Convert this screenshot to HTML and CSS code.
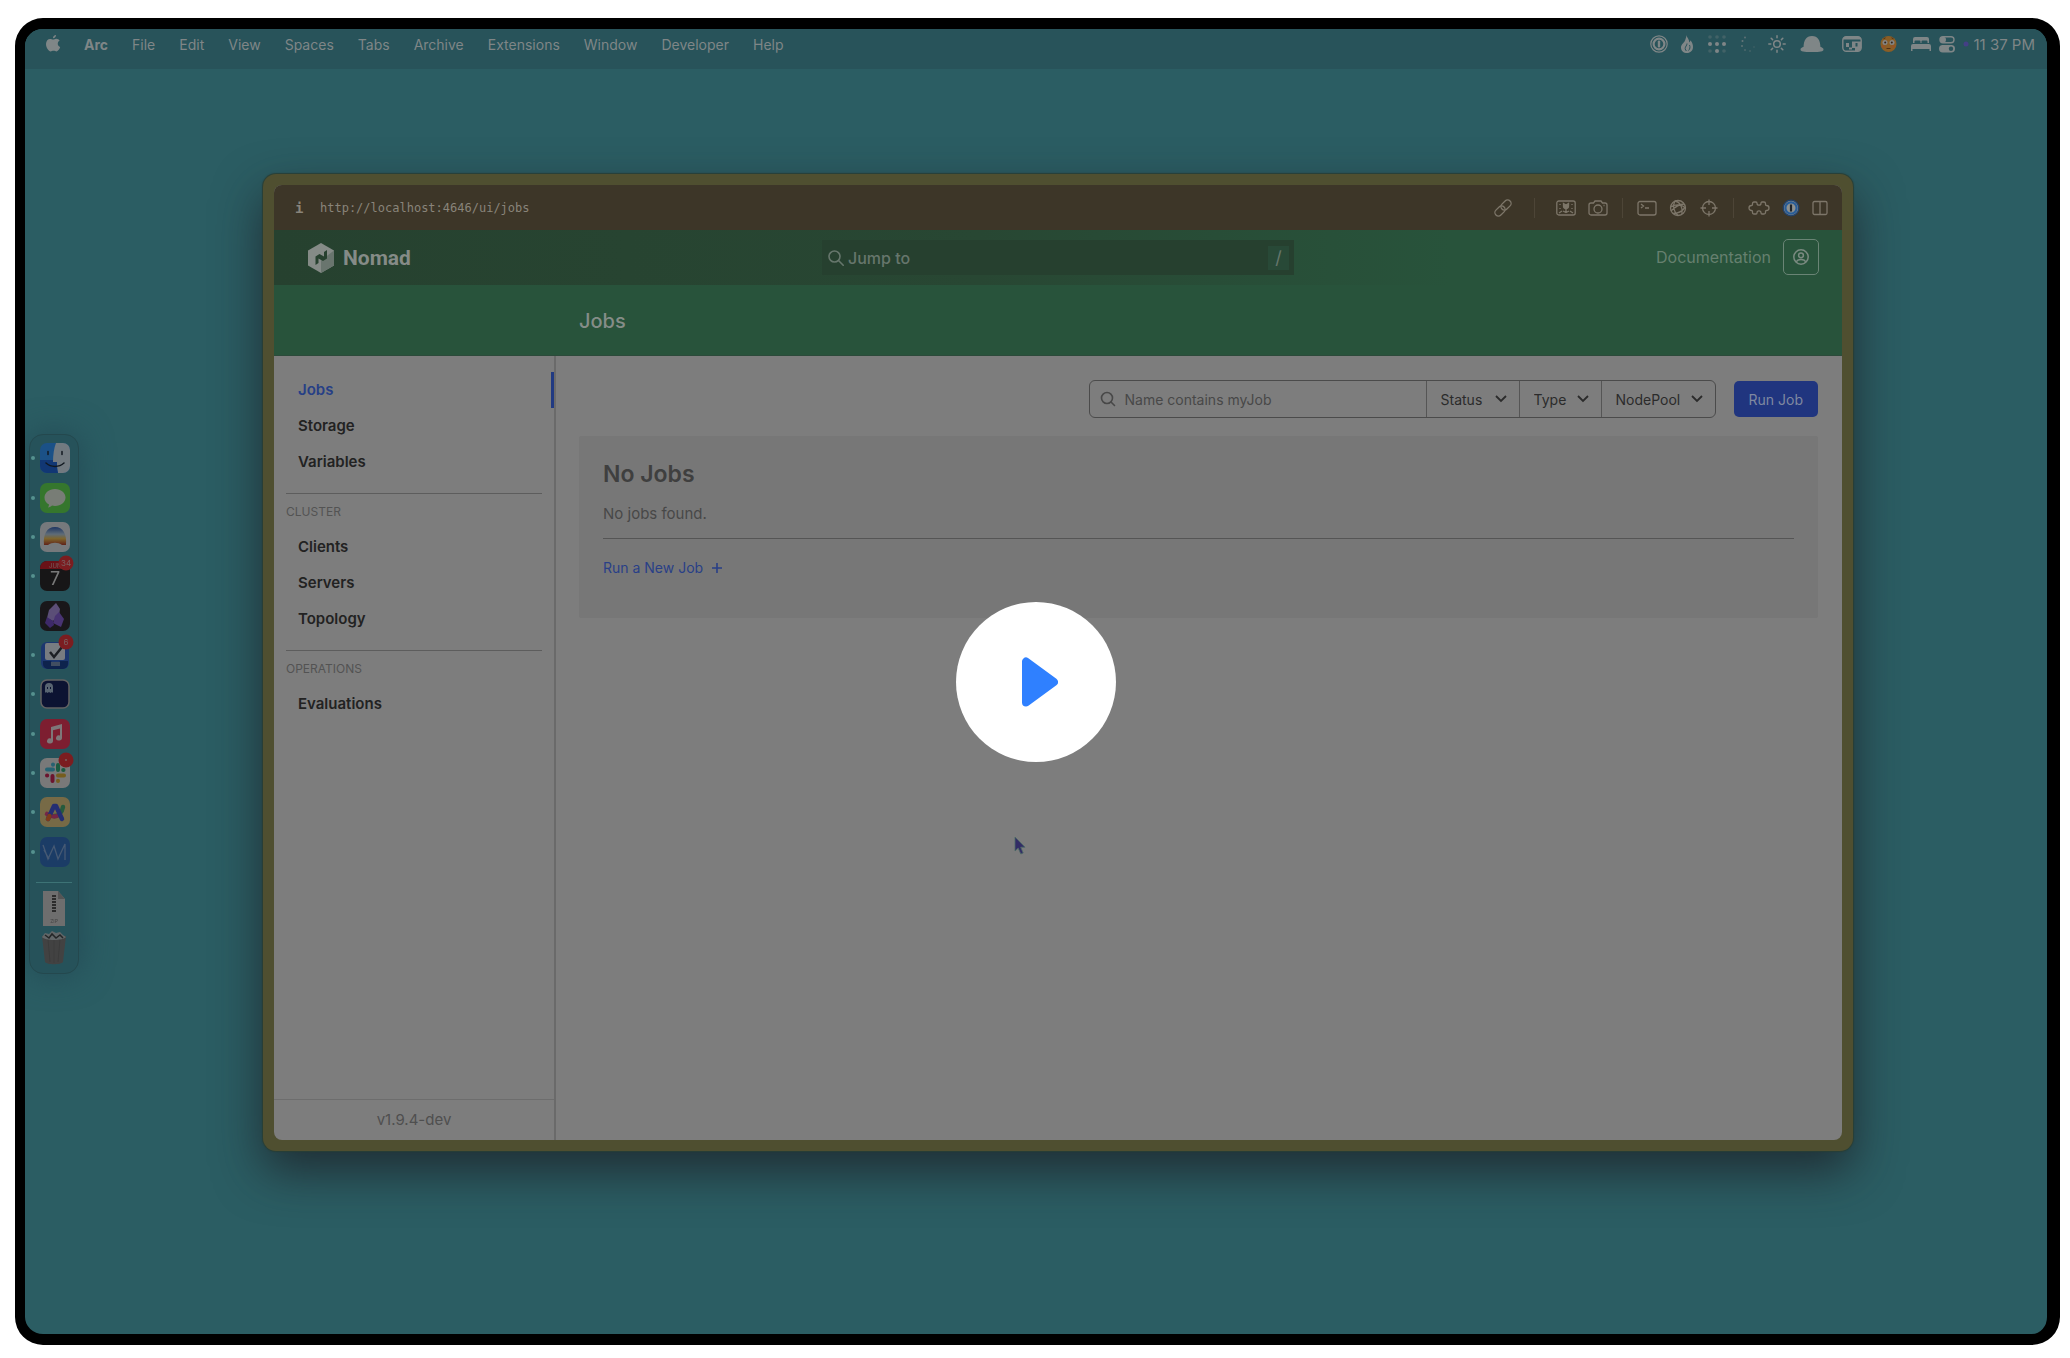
FILE: index.html
```html
<!DOCTYPE html>
<html lang="en">
<head>
<meta charset="utf-8">
<title>Nomad - Jobs</title>
<link rel="stylesheet" href="styles.css">
</head>
<body>
<main class="device">
  <header class="menubar">
    <svg class="apple" width="16" height="20" viewBox="0 0 16 20"><path d="M11 1c.1 1.700-1.300 3.300-3 3.300C7.800 2.700 9.400 1.100 11 1zM8.200 5.600c.8 0 1.700-.9 3.200-.8 1.300.1 2.500.7 3.200 1.800-2.700 1.700-2.300 5.400.6 6.500-.6 1.700-2 4.300-3.600 4.300-1.200 0-1.600-.7-3-.7s-1.900.7-3 .7C3.700 17.400 1 13.800 1 10.100 1 6.800 3 5 5 5c1.400 0 2.300.6 3.200.6z"/></svg>
    <nav class="menus">
      <a href="#" class="app-name">Arc</a><a href="#">File</a><a href="#">Edit</a><a href="#">View</a><a href="#">Spaces</a><a href="#">Tabs</a><a href="#">Archive</a><a href="#">Extensions</a><a href="#">Window</a><a href="#">Developer</a><a href="#">Help</a>
    </nav>
    <div class="status">
      <div class="status-group">
        <svg width="18" height="18" viewBox="0 0 18 18"><circle cx="9" cy="9" r="8.200" fill="none" stroke="currentColor" stroke-width="1.200"/><circle cx="9" cy="9" r="5.400" fill="none" stroke="currentColor" stroke-width="2.200"/><rect x="7.800" y="5.500" width="2.400" height="7" rx="1"/></svg>
        <svg width="12" height="18" viewBox="0 0 12 18"><path d="M5.500 0c.4 3 3 4 2.600 7.500.8-.6 1.200-1.200 1.300-2.200C11.500 8 12 9.500 12 12c0 3.500-2.600 6-6 6s-6-2.500-6-5.600C0 9.500 3 8 4 5.500 4.700 3.700 5.400 2 5.500 0z"/><path d="M6 8.500c0 2-1.800 3-1.800 5 0 1.200.6 2 1.300 2.500M8.500 10c.8 2 .6 4-1 5.500" fill="none" stroke="#28535a" stroke-width="1"/></svg>
        <svg width="22" height="20" viewBox="0 0 22 20"><g opacity=".3"><circle cx="4" cy="3" r="1.800"/><circle cx="11" cy="3" r="1.800"/><circle cx="18" cy="3" r="1.800"/><circle cx="4" cy="17" r="1.800"/><circle cx="18" cy="17" r="1.800"/></g><circle cx="4" cy="10" r="2"/><circle cx="11" cy="10" r="2"/><circle cx="18" cy="10" r="2"/><circle cx="11" cy="17" r="2"/></svg>
        <svg width="14" height="18" viewBox="0 0 14 18"><circle cx="1.500" cy="6" r="1" opacity=".7"/><circle cx="1" cy="11" r="1" opacity=".6"/><circle cx="4" cy="2.500" r="1" opacity=".6"/><circle cx="4" cy="15" r="1" opacity=".4"/><circle cx="9" cy="16" r="1" opacity=".3"/><circle cx="13" cy="12" r="1" opacity=".2"/></svg>
        <svg width="18" height="18" viewBox="0 0 18 18" fill="none" stroke="currentColor" stroke-width="1.500" stroke-linecap="round"><circle cx="9" cy="9" r="3.300"/><path d="M9 .8v2M9 15.200v2M.8 9h2M15.200 9h2M3.200 3.200l1.400 1.400M13.400 13.400l1.400 1.400M14.800 3.200l-1.400 1.400M4.600 13.400l-1.400 1.400"/></svg>
      </div>
      <div class="status-group wide">
        <svg width="24" height="18" viewBox="0 0 24 18"><path d="M3.500 12C4 5 6 1 12 1s8 4 8.500 11c1.600.4 3 1.200 3 2.400 0 2-3 2.600-11.500 2.600S.5 16.400.5 14.400C.5 13.200 1.900 12.400 3.500 12z"/></svg>
        <svg width="20" height="18" viewBox="0 0 20 18"><rect x=".8" y="1.800" width="18.400" height="14.400" rx="3.500" fill="none" stroke="currentColor" stroke-width="1.400"/><path d="M1 4.500C1 2.500 2 1.500 4 1.500h12c2 0 3 1 3 3zM10 6.500h9V13c0 2-1 3-3 3h-3v-3h-3z"/><path d="M4 8h3v4H4zM7 12.500h3v2H7z"/><path d="M13.500 8h2v3.500h-2z" fill="#28535a"/></svg>
        <svg width="17" height="18" viewBox="0 0 17 18"><circle cx="8.500" cy="9" r="8" fill="#8a5e26"/><circle cx="5" cy="7.500" r="2.500" fill="#858585"/><circle cx="12" cy="7.500" r="2.500" fill="#858585"/><circle cx="5.200" cy="7.500" r="1" fill="#352719"/><circle cx="11.800" cy="7.500" r="1" fill="#352719"/><path d="M6.500 13.500h4M3.500 3.800l2-1M13.500 3.800l-2-1" stroke="#4e3015"/><ellipse cx="3.500" cy="11.500" rx="2" ry="1.300" fill="#a04a2a" opacity=".5"/><ellipse cx="13.500" cy="11.500" rx="2" ry="1.300" fill="#a04a2a" opacity=".5"/></svg>
      </div>
      <div class="status-group tight">
        <svg width="20" height="16" viewBox="0 0 20 16"><path d="M2 7V3a2 2 0 0 1 2-2h12a2 2 0 0 1 2 2v4h-1.500V5.500a1 1 0 0 0-1-1H11.500a1 1 0 0 0-1 1V7h-1V5.500a1 1 0 0 0-1-1h-4a1 1 0 0 0-1 1V7zM2 8h16a2 2 0 0 1 2 2v5h-1.500v-2h-17v2H0v-5a2 2 0 0 1 2-2z"/></svg>
        <svg width="16" height="18" viewBox="0 0 16 18"><rect x="1" y="1.700" width="14" height="6" rx="3" fill="none" stroke="currentColor" stroke-width="1.400"/><circle cx="4" cy="4.700" r="3"/><rect x="0" y="10" width="16" height="7.500" rx="3.700"/><circle cx="12" cy="13.700" r="2.200" fill="#28535a"/></svg>
        <svg width="6" height="6" viewBox="0 0 6 6"><circle cx="3" cy="3" r="2.500" fill="#443f85"/></svg>
      </div>
      <time class="clock">11 37 PM</time>
    </div>
  </header>

  <section class="desktop">
    <aside class="dock-area">
      <div class="dock">
        <ul class="dock-apps">
          <li><svg width="30" height="30" viewBox="0 0 30 30"><rect width="30" height="30" rx="7" fill="#2e8be8"/><path d="M16 0h7a7 7 0 0 1 7 7v16a7 7 0 0 1-7 7h-5c-1-4-1.200-7-1-11h-4C13 12 14 5 16 0z" fill="#c4d3dc"/><path d="M0 17h13v2h4c0 4 0 7 1 11H7a7 7 0 0 1-7-7z" fill="#1d5fc8"/><path d="M8 8.500v3M22 8.500v3M6 20c5 4.500 13 4.500 18 0" fill="none" stroke="#1c2836" stroke-width="1.500" stroke-linecap="round"/></svg></li>
          <li><svg width="30" height="30" viewBox="0 0 30 30"><rect width="30" height="30" rx="7" fill="#5ccb4d"/><path d="M15 6c6 0 10.500 3.800 10.500 8.500S21 23 15 23c-1 0-2-.1-3-.4-1 1-2.500 1.900-4 2 .7-.9 1-1.900 1-3-3-1.600-4.500-4-4.500-7.100C4.500 9.800 9 6 15 6z" fill="#cfd8cb"/></svg></li>
          <li><svg width="30" height="30" viewBox="0 0 30 30"><defs><linearGradient id="sunrise" x1="0" y1="0" x2="0" y2="1"><stop offset="0" stop-color="#315ba8"/><stop offset=".4" stop-color="#a2bad0"/><stop offset=".65" stop-color="#d9ae4c"/><stop offset="1" stop-color="#a53c2c"/></linearGradient></defs><rect width="30" height="30" rx="7" fill="#cbd0d6"/><path d="M4 23C3 12 7 5 15 5s12 7 11 18h-4c-4-3-10-3-14 0z" fill="url(#sunrise)"/></svg></li>
          <li><svg width="36" height="36" viewBox="0 0 36 36"><rect y="6" width="30" height="30" rx="7" fill="#282627"/><path d="M0 13a7 7 0 0 1 7-7h16a7 7 0 0 1 7 7v1H0z" fill="#b61e28"/><text x="9" y="13" font-size="6" fill="#c8a0a0">JUN</text><text x="15" y="30" font-size="18" text-anchor="middle" fill="#d0d0d0">7</text><circle cx="26" cy="8" r="7.500" fill="#d43238"/><text x="26" y="11" font-size="8" text-anchor="middle" fill="#d0a4a4">34</text></svg></li>
          <li><svg width="30" height="30" viewBox="0 0 30 30"><rect width="30" height="30" rx="7" fill="#2b282c"/><path d="M16 2l4 6-1 6-6 6-6-3 2-8z" fill="#9d87ce"/><path d="M19 11l5 7-3 8-8-4 2-7z" fill="#7c58c4"/><path d="M7 16l6 4 1 4-4 3-5-5z" fill="#6947b4"/></svg></li>
          <li><svg width="36" height="36" viewBox="0 0 36 36"><rect x="1" y="8" width="28" height="27" rx="6" fill="#315fc0"/><path d="M3 27h8l2 3h5l2-3h8v3a5 5 0 0 1-5 5H8a5 5 0 0 1-5-5z" fill="#183c85"/><rect x="5" y="9" width="20" height="17" rx="2" fill="#cfd5de"/><path d="M10 18l4 5 8-10" fill="none" stroke="#30363e" stroke-width="2.500"/><path d="M11 28h9v4h-9z" fill="#7086a8"/><circle cx="26" cy="8" r="7.500" fill="#d43238"/><text x="26" y="11" font-size="8" text-anchor="middle" fill="#d0a4a4">6</text></svg></li>
          <li><svg width="30" height="30" viewBox="0 0 30 30"><rect x="1" y="1" width="28" height="28" rx="6" fill="#142057" stroke="#a8a8a8" stroke-width="1.500"/><path d="M5 14V8a4 4 0 0 1 8 0v6l-1-1-1.500 1L9 13l-1.500 1L6 13z" fill="#98adc2"/><path d="M7.500 8v2M10.500 8v2" stroke="#142057"/></svg></li>
          <li><svg width="30" height="30" viewBox="0 0 30 30"><rect width="30" height="30" rx="7" fill="#d83452"/><path d="M11 8l11-3v14a3 2.500 0 1 1-2-2.400V9.500l-7 1.800V22a3 2.500 0 1 1-2-2.400z" fill="#d9cdd0"/></svg></li>
          <li><svg width="36" height="36" viewBox="0 0 36 36"><rect y="6" width="30" height="30" rx="7" fill="#d1d1d1"/><g stroke-width="4" stroke-linecap="round" fill="none"><path d="M7 17.500h6M13 12.500v.2" stroke="#41a9c4"/><path d="M18 13v5M23.500 18h-.3" stroke="#2f9b70"/><path d="M18 23.500h6M18 29v-.3" stroke="#caa035"/><path d="M12.500 24v5M7 23.500h.2" stroke="#b82250"/></g><circle cx="26" cy="8" r="7.500" fill="#d43238"/><circle cx="26" cy="8" r="1" fill="#d0a4a4"/></svg></li>
          <li><svg width="30" height="30" viewBox="0 0 30 30"><rect width="30" height="30" rx="7" fill="#cdb778"/><g fill="none" stroke-width="4.500" stroke-linecap="round"><path d="M23 10c-1 6-5 9-9 9" stroke="#3f9c69"/><path d="M7 17c4 3 9 3 12 1" stroke="#c93f78"/><path d="M8 22l6-13h2l6 13" stroke="#3e50c4" stroke-linejoin="round"/><path d="M8 22l1.500-3" stroke="#d8642c"/></g></svg></li>
          <li><svg width="30" height="30" viewBox="0 0 30 30"><rect width="30" height="30" rx="7" fill="#2f68b0"/><path d="M3 8l5 14 6-13 4 13 7-15v16M4 13l5 9" fill="none" stroke="#7899c6" stroke-width="1.300"/></svg></li>
        </ul>
        <hr class="dock-rule">
        <svg class="dock-file" width="24" height="36" viewBox="0 0 24 36"><path d="M1 0h15l7 8v27H1z" fill="#bdbdbd"/><path d="M16 0v8h7z" fill="#929292"/><path d="M12 4v18" stroke="#4c4c4c" stroke-width="4" stroke-dasharray="2 1"/><text x="12" y="32" font-size="5" text-anchor="middle" fill="#777">ZIP</text></svg>
        <svg class="dock-trash" width="26" height="34" viewBox="0 0 26 34"><path d="M1 5h24l-3 26c-2 3-16 3-18 0z" fill="#727272"/><path d="M7 8l2 23M13 9v23M19 8l-2 23" stroke="#666"/><path d="M1 6l3-4 4 1 3-3 4 2 4-1 3 3 3 2c-3 4-21 4-24 0z" fill="#a8b0b3"/><path d="M4 4l4 3 3-4 4 4 4-3 3 3" fill="none" stroke="#3c4143" stroke-width="1.500"/></svg>
      </div>
    </aside>

    <article class="window">
      <div class="screen">
        <div class="urlbar">
          <b class="info">i</b>
          <span class="url">http://localhost:4646/ui/jobs</span>
          <div class="tools">
            <svg width="20" height="20" viewBox="0 0 20 20"><g transform="rotate(-45 10 10)"><rect x="0" y="6.500" width="11.500" height="7" rx="3.500"/><rect x="8.500" y="6.500" width="11.500" height="7" rx="3.500"/></g></svg>
            <i class="sep sep-wide"></i>
            <svg width="20" height="16" viewBox="0 0 20 16"><rect x=".8" y="1" width="18.400" height="14" rx="2"/><path d="M7.500 3.500L10 5l2.500-1.500V6a2.500 2.500 0 0 1-5 0z" fill="#7d7669"/><path d="M10 8v4M7 11l3 1.500 3-1.500M3 13l3-2M17 13l-3-2M4 4v1M16 4v1M4 8v1M16 8v1"/></svg>
            <svg width="20" height="16" viewBox="0 0 20 16"><path d="M3 3h2.500L7 1h6l1.500 2H17a2 2 0 0 1 2 2v8a2 2 0 0 1-2 2H3a2 2 0 0 1-2-2V5a2 2 0 0 1 2-2z"/><circle cx="10" cy="9" r="4"/><path d="M15.500 5.500h1"/></svg>
            <i class="sep"></i>
            <svg width="20" height="16" viewBox="0 0 20 16"><rect x="1" y="1.500" width="18" height="13.500" rx="2"/><path d="M4 4l2.500 2L4 8M8 8h4"/></svg>
            <svg width="18" height="18" viewBox="0 0 18 18"><circle cx="9" cy="9" r="7.500"/><path d="M6 2c-3 5-1 11 3 14.500M6 2c5 1 8 6 7 13M1.500 8c5-3 11-3 15 1M2 12c4-4 8-7 13-7M4 14.500c4 0 9-2 12-6"/></svg>
            <svg width="20" height="20" viewBox="0 0 20 20"><circle cx="10" cy="10" r="6.500"/><path d="M10 1.500v5.500M10 13v5.500M1.500 10H7M13 10h5.500"/></svg>
            <i class="sep"></i>
            <svg width="22" height="18" viewBox="0 0 22 18"><path d="M6 3h2c.7 0 1 .5 1 1.200a2 2 0 0 0 4 0c0-.7.3-1.200 1-1.200h2c1 0 1.500.5 1.500 1.500v1c0 .6.400 1 1 1 1.500 0 2.500 1 2.500 2.500s-1 2.500-2.500 2.500c-.6 0-1 .4-1 1v1c0 1-.5 1.500-1.500 1.500h-2c-.7 0-1-.5-1-1.200a2 2 0 0 0-4 0c0 .7-.3 1.200-1 1.200H6c-1 0-1.500-.5-1.500-1.500v-1c0-.6-.4-1-1-1C2 11.500 1 10.500 1 9s1-2.500 2.500-2.500c.6 0 1-.4 1-1v-1C4.500 3.500 5 3 6 3z"/></svg>
            <svg width="18" height="18" viewBox="0 0 18 18"><circle cx="9" cy="9" r="7.800" fill="#8a8a86" stroke="#21416b"/><circle cx="9" cy="9" r="5.600" fill="#8f9290" stroke="#285d99" stroke-width="2.200"/><path d="M9 5.500v7" stroke="#20252b" stroke-width="2.200"/></svg>
            <svg width="16" height="16" viewBox="0 0 16 16"><rect x="1" y="1.500" width="14" height="13" rx="1.500"/><path d="M8 1.500v13"/></svg>
          </div>
        </div>

        <div class="navbar">
          <a href="#" class="brand">
            <svg width="26" height="30" viewBox="0 0 26 30"><path d="M13 0l13 7.500v15L13 30 0 22.500v-15z" fill="#858b87"/><path d="M26 7.500v15L13 30V17.500z" fill="#69756e"/><path d="M7.500 22v-8.500l4-2.500 4.500 2.500V9l3-2v8.500L15 18l-4.500-2.500V20z" fill="#27412f"/></svg>
            <span>Nomad</span>
          </a>
          <label class="jump">
            <svg width="16" height="16" viewBox="0 0 16 16" fill="none" stroke="currentColor" stroke-width="1.600" stroke-linecap="round"><circle cx="6.500" cy="6.500" r="5.500"/><path d="M10.500 10.500l4.700 4.700"/></svg>
            <input type="search" placeholder="Jump to" aria-label="Jump to">
            <kbd>/</kbd>
          </label>
          <div class="account">
            <a href="#">Documentation</a>
            <button type="button" class="user" aria-label="Profile"><svg width="16" height="16" viewBox="0 0 16 16" fill="none" stroke="currentColor" stroke-width="1.500"><circle cx="8" cy="8" r="7.200"/><circle cx="8" cy="6.300" r="2.400"/><path d="M3.500 13c.5-2 2-2.500 4.500-2.500s4 .5 4.500 2.500"/></svg></button>
          </div>
        </div>

        <div class="titlebar"><h1>Jobs</h1></div>

        <div class="body">
          <nav class="sidebar">
            <ul>
              <li><a href="#" class="active">Jobs</a></li>
              <li><a href="#">Storage</a></li>
              <li><a href="#">Variables</a></li>
            </ul>
            <h2>CLUSTER</h2>
            <ul>
              <li><a href="#">Clients</a></li>
              <li><a href="#">Servers</a></li>
              <li><a href="#">Topology</a></li>
            </ul>
            <h2>OPERATIONS</h2>
            <ul>
              <li><a href="#">Evaluations</a></li>
            </ul>
            <footer>v1.9.4-dev</footer>
          </nav>

          <section class="content">
            <div class="toolbar">
              <div class="filters">
                <label class="filter-search">
                  <svg width="16" height="16" viewBox="0 0 16 16" fill="none" stroke="currentColor" stroke-width="1.600" stroke-linecap="round"><circle cx="7" cy="7" r="5.500"/><path d="M11 11l3.500 3.500"/></svg>
                  <input type="search" placeholder="Name contains myJob" aria-label="Search jobs">
                </label>
                <label class="filter status-filter"><select aria-label="Status"><option>Status</option></select><svg width="12" height="8" viewBox="0 0 12 8"><path d="M1 1l5 5 5-5"/></svg></label>
                <label class="filter type-filter"><select aria-label="Type"><option>Type</option></select><svg width="12" height="8" viewBox="0 0 12 8"><path d="M1 1l5 5 5-5"/></svg></label>
                <label class="filter pool-filter"><select aria-label="NodePool"><option>NodePool</option></select><svg width="12" height="8" viewBox="0 0 12 8"><path d="M1 1l5 5 5-5"/></svg></label>
              </div>
              <button type="button" class="run">Run Job</button>
            </div>
            <div class="empty">
              <h2>No Jobs</h2>
              <p>No jobs found.</p>
              <hr>
              <a href="#">Run a New Job <svg width="12" height="12" viewBox="0 0 12 12"><path d="M6 1v10M1 6h10" stroke="currentColor" stroke-width="1.600"/></svg></a>
            </div>
          </section>
        </div>
      </div>
    </article>
  </section>

  <button type="button" class="play" aria-label="Play video"><svg width="36" height="50" viewBox="0 0 36 50"><path d="M4 4.500v41L32 25z" fill="#2f80ff" stroke="#2f80ff" stroke-width="8" stroke-linejoin="round"/></svg></button>
  <svg class="cursor" width="12" height="20" viewBox="0 0 12 20"><path d="M1 1v14l3.200-3 2.600 6 2.400-1-2.500-5.800H11z" fill="#322c66" stroke="#4b6b66" stroke-width=".8"/></svg>
</main>
</body>
</html>
```
FILE: styles.css
```css
* { box-sizing: border-box; }
html { background: #fff; }
body {
  margin: 0;
  padding: 18px 10px 13px 15px;
  min-height: 100vh;
  display: flex;
  font-family: Inter, "Liberation Sans", sans-serif;
  font-size: 16px;
}
a { color: inherit; text-decoration: none; }
ul { list-style: none; margin: 0; padding: 0; }
svg { display: block; flex: none; }
h1, h2, p { margin: 0; }
button, input, select { font: inherit; color: inherit; }
input::placeholder { color: inherit; opacity: 1; }

.device {
  position: relative;
  flex: 1;
  display: flex;
  flex-direction: column;
  overflow: hidden;
  border: solid #000;
  border-width: 11px 13px 11px 10px;
  border-radius: 28px;
  background: #2b5d63;
}

/* Menu bar */
.menubar {
  height: 40px;
  padding: 0 12px 10px 20px;
  display: flex;
  align-items: center;
  background: #28535a;
  color: #7f8687;
  font-size: 14px;
}
.menubar svg { fill: currentColor; }
.menubar svg[fill="none"] { fill: none; }
.menus { display: flex; gap: 24px; margin-left: 23px; }
.app-name { font-weight: 700; }
.status { display: flex; align-items: center; margin-left: auto; gap: 14px; }
.status-group { display: flex; align-items: center; gap: 13px; }
.wide { gap: 18px; }
.tight { gap: 8px; }
.clock { margin-left: -10px; font-size: 15px; white-space: nowrap; }

/* Desktop and dock */
.desktop {
  position: relative;
  flex: 1;
  display: flex;
  padding: 105px 194px 183px 238px;
}
.dock-area {
  position: absolute;
  left: 4px;
  top: 4px;
  bottom: 0;
  display: flex;
  align-items: center;
}
.dock {
  width: 50px;
  height: 540px;
  padding: 4px 0 8px;
  display: flex;
  flex-direction: column;
  align-items: center;
  border: 1px solid #24484e;
  border-radius: 14px;
  background: #26525a;
  box-shadow: 0 0 32px #234a56;
}
.dock-apps { flex: 1; width: 100%; display: flex; flex-direction: column; }
.dock-apps li {
  flex: 1;
  display: flex;
  align-items: center;
  gap: 5px;
  padding-left: 1px;
}
.dock-apps li::before {
  content: "";
  width: 4px;
  height: 4px;
  border-radius: 50%;
  background: #55918e;
}
.dock-apps li:nth-child(5)::before { background: none; }
.dock svg { filter: brightness(.58); }
.dock-apps svg[height="36"] { margin-top: -6px; }
.dock-rule {
  width: 36px;
  margin: 10px 0 8px;
  border: 0;
  border-top: 1px solid #3d7376;
}
.dock-trash { margin-top: 4px; }

/* Browser window */
.window {
  flex: 1;
  display: flex;
  padding: 11px;
  border-radius: 13px;
  background: #4f4f30;
  box-shadow: 0 0 1px 1px #293f36, 0 20px 48px rgba(28, 30, 36, .75);
}
.screen {
  flex: 1;
  display: flex;
  flex-direction: column;
  min-width: 0;
  overflow: hidden;
  border-radius: 8px;
  background: #7d7d7d;
}
.urlbar {
  height: 45px;
  padding: 0 14px 0 21px;
  display: flex;
  align-items: center;
  background: #3d3628;
  color: #89847a;
  font-family: "DejaVu Sans Mono", "Liberation Mono", monospace;
  font-size: 12px;
}
.info { width: 25px; font-size: 14px; }
.tools { margin-left: auto; display: flex; align-items: center; gap: 12px; }
.tools svg { fill: none; stroke: #7d7669; stroke-width: 1.300; }
.sep { width: 1px; height: 20px; margin: 0 2px; background: #4d4537; }
.sep-wide { margin: 0 9px; }

.navbar {
  height: 55px;
  padding: 0 23px 0 34px;
  display: grid;
  grid-template-columns: 514px 472px 1fr;
  align-items: center;
  background: linear-gradient(90deg, #26412f, #284733 45%, #28533b 75%);
  color: #7b8780;
}
.brand {
  display: flex;
  align-items: center;
  gap: 9px;
  color: #858b87;
  font: bold 21px Roboto, sans-serif;
}
.jump {
  height: 35px;
  padding: 0 5px 0 6px;
  display: flex;
  align-items: center;
  gap: 4px;
  background: #26402f;
  color: #66766c;
  font-weight: 500;
}
.jump input { flex: 1; min-width: 0; padding: 0; border: 0; outline: 0; background: none; }
.jump kbd {
  width: 21px;
  background: #284937;
  font: 18px/24px Inter, sans-serif;
  text-align: center;
}
.account {
  padding-bottom: 2px;
  display: flex;
  align-items: center;
  justify-content: flex-end;
  gap: 12px;
  color: #66806f;
}
.user {
  width: 36px;
  height: 36px;
  padding: 0;
  display: grid;
  place-items: center;
  border: 1px solid #6a8475;
  border-radius: 5px;
  background: none;
  color: #7a8a80;
}
.titlebar {
  height: 71px;
  padding: 2px 0 0 305px;
  display: flex;
  align-items: center;
  border-bottom: 1px solid #2c4a3a;
  background: #28533b;
  color: #858d88;
}
.titlebar h1 { font-size: 20px; font-weight: 500; }

.body { flex: 1; display: flex; }
.sidebar {
  width: 282px;
  display: flex;
  flex-direction: column;
  padding-top: 16px;
  border-right: 2px solid #6a6a6a;
}
.sidebar a {
  display: block;
  height: 36px;
  padding-left: 24px;
  border-right: 3px solid transparent;
  color: #222;
  font-size: 15px;
  font-weight: 600;
  line-height: 36px;
}
.sidebar .active { border-color: #213a82; color: #263f86; }
.sidebar h2 {
  margin: 13px 12px 0;
  padding: 8px 0 7px;
  border-top: 1px solid #5d5d5d;
  color: #535353;
  font-size: 12px;
  font-weight: 400;
  line-height: 20px;
}
.sidebar footer {
  margin-top: auto;
  border-top: 1px solid #6d6d6d;
  color: #4f4f4f;
  font-size: 15px;
  line-height: 40px;
  text-align: center;
}

.content { flex: 1; padding: 24px 24px 24px 23px; }
.toolbar { display: flex; justify-content: flex-end; align-items: center; gap: 18px; font-size: 14px; }
.filters {
  height: 38px;
  display: flex;
  border: 1px solid #4b4b4b;
  border-radius: 6px;
  color: #2b2b2b;
}
.filter-search { width: 336px; padding: 0 10px; display: flex; align-items: center; gap: 9px; color: #484848; }
.filter-search input { flex: 1; min-width: 0; padding: 0; border: 0; outline: 0; background: none; }
.filter { position: relative; border-left: 1px solid #555; }
.filter select {
  width: 100%;
  height: 100%;
  padding: 0 0 0 14px;
  border: 0;
  appearance: none;
  background: none;
}
.filter svg {
  position: absolute;
  right: 12px;
  top: 14px;
  fill: none;
  stroke: #2b2b2b;
  stroke-width: 1.800;
  pointer-events: none;
}
.status-filter { width: 93px; }
.type-filter { width: 82px; }
.pool-filter { width: 114px; }
.run {
  height: 36px;
  padding: 0 15px;
  border: 0;
  border-radius: 5px;
  background: #20357f;
  color: #7f88a0;
}
.empty {
  margin-top: 18px;
  padding: 20px 24px 36px;
  border-radius: 2px;
  background: #777;
  color: #484848;
}
.empty h2 { color: #3f3f3f; font-size: 23px; font-weight: 600; line-height: 36px; }
.empty p { margin-top: 10px; font-size: 15px; line-height: 24px; }
.empty hr { margin: 12px 0 15px; border: 0; border-top: 1px solid #555; }
.empty a {
  display: inline-flex;
  align-items: center;
  gap: 8px;
  color: #293f87;
  font-size: 14px;
  line-height: 28px;
}

/* Video controls over the poster */
.play {
  position: absolute;
  inset: 0;
  width: 160px;
  height: 160px;
  margin: auto;
  padding: 0 0 0 7px;
  display: grid;
  place-items: center;
  border: 0;
  border-radius: 50%;
  background: #fff;
}
.cursor { position: absolute; left: calc(50% - 22px); top: calc(50% + 154px); }
```
